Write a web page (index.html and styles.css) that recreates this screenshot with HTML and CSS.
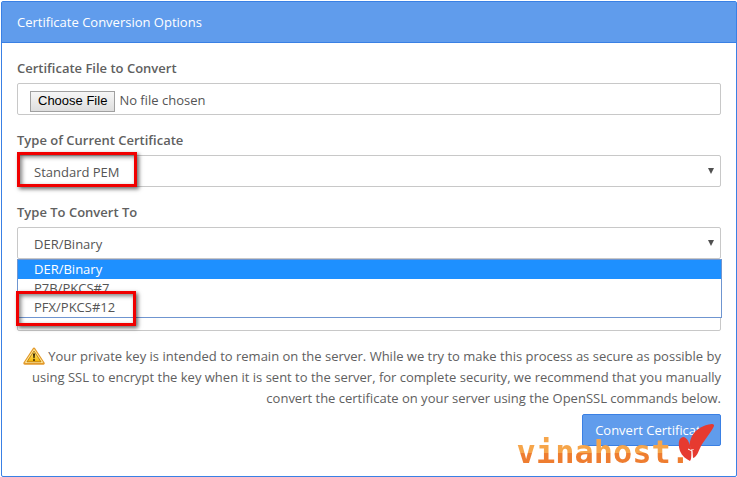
FILE: index.html
```html
<!DOCTYPE html>
<html lang="en">
<head>
    <meta charset="UTF-8">
    <meta name="viewport" content="width=device-width, initial-scale=1.0">
    <title>Certificate Conversion Options</title>
    <link rel="stylesheet" href="styles.css">
</head>
<body>
    <form class="panel">
        <h1 class="panel-heading">Certificate Conversion Options</h1>
        <div class="panel-body">
            <div class="form-group">
                <label for="cert-file">Certificate File to Convert</label>
                <input class="form-control" type="file" id="cert-file">
            </div>
            <div class="form-group">
                <label for="current-type">Type of Current Certificate</label>
                <div class="select">
                    <select class="form-control" id="current-type">
                        <option>Standard PEM</option>
                    </select>
                    <span class="highlight highlight-current"></span>
                </div>
            </div>
            <div class="form-group">
                <label for="convert-type">Type To Convert To</label>
                <div class="select">
                    <select class="form-control" id="convert-type">
                        <option>DER/Binary</option>
                        <option>P7B/PKCS#7</option>
                        <option>PFX/PKCS#12</option>
                    </select>
                    <ul class="options" role="listbox" aria-label="Type To Convert To">
                        <li class="selected" role="option" aria-selected="true">DER/Binary</li>
                        <li role="option">P7B/PKCS#7</li>
                        <li role="option">PFX/PKCS#12</li>
                    </ul>
                    <span class="highlight highlight-pfx"></span>
                </div>
            </div>
            <!-- sits under the open list -->
            <div class="form-group form-group-covered">
                <input class="form-control" type="text" aria-label="Private key">
            </div>
            <p class="note">
                <svg class="warning" viewBox="0 0 22 20" aria-hidden="true">
                    <defs>
                        <linearGradient id="amber" x1="0" y1="0" x2="0" y2="1">
                            <stop offset="0" stop-color="#fff08a"/>
                            <stop offset="1" stop-color="#f5b400"/>
                        </linearGradient>
                    </defs>
                    <path d="M11 3 20.3 17.3H1.7Z" fill="#e39a2c" stroke="#e39a2c" stroke-width="2.8" stroke-linejoin="round"/>
                    <path d="M11 3.4 19.6 16.4H2.4Z" fill="#ffe27a" stroke="#ffe9a0" stroke-linejoin="round"/>
                    <path d="M11 5 18 15.8H4Z" fill="url(#amber)" stroke="#b87408" stroke-width="0.8" stroke-linejoin="round"/>
                    <path d="M9.9 7.5h2.2l-.5 4.8h-1.2Z" fill="#3c2a05"/>
                    <circle cx="11" cy="14" r="1" fill="#3c2a05"/>
                </svg>
                Your private key is intended to remain on the server. While we try to make this process as secure as possible by using SSL to encrypt the key when it is sent to the server, for complete security, we recommend that you manually convert the certificate on your server using the OpenSSL commands below.
            </p>
            <div class="actions">
                <button class="btn" type="submit">Convert Certificate</button>
                <div class="watermark">
                    <span class="watermark-text">vinahost.</span>
                    <svg class="watermark-mark" viewBox="0 0 36 38" aria-hidden="true">
                        <path d="M5 13C0 14 0 21 2 27C4 32 8 35 12 37C14 34 14 28 13 24C11 18 9 13 5 13Z" fill="#e63a30"/>
                        <path d="M34 0C25 1 18 5 14 12C11 18 11 23 14 26L15 34C19 33 20 28 23 22C27 15 34 7 36 2C36 1 36 0 34 0Z" fill="#e63a30"/>
                        <path d="M10 25 13 26.500 15.500 25.500M14 27v8" fill="none" stroke="#fff" stroke-width="1"/>
                    </svg>
                </div>
            </div>
        </div>
    </form>
</body>
</html>
```
FILE: styles.css
```css
* { box-sizing: border-box; }
body { margin: 1px 0 0 1px; font-family: "Open Sans", sans-serif; font-size: 13px; line-height: 20px; color: #606060; background-color: #fff; }
.panel { border: 1px solid #3a80e4; border-radius: 2px; }
.panel-heading { margin: 0; padding: 10px 15px; font-size: 13px; font-weight: 400; color: #fff; background-color: #609cec; border-bottom: 1px solid #3a80e4; }
.panel-body { padding: 15px 15px 30px; }

.form-group { margin-bottom: 15px; }
.form-group label { display: block; margin-bottom: 5px; font-weight: 600; }
.form-group-covered { padding-top: 25px; }
.form-control { display: block; width: 100%; height: 32px; padding: 0 16px; font: inherit; color: #555; background-color: #fff; border: 1px solid #c8c8c8; border-radius: 2px; }
input.form-control { padding: 6px 12px; }
.form-control::file-selector-button { height: 21px; margin: 0 4px 0 0; padding: 0 7px; font: 13px/18px "Liberation Sans", Arial, sans-serif; color: #000; background: linear-gradient(#f6f6f6, #dedede); border: 1px solid #a0a0a0; border-radius: 0; }

.select { position: relative; }
select.form-control { padding-top: 2px; appearance: none; }
.select::after { content: ""; position: absolute; top: 13px; right: 7px; border: 3px solid transparent; border-top: 6px solid #505050; border-bottom: 0; }
.options { position: absolute; top: 32px; left: 0; right: -1px; margin: 0; padding: 0; list-style: none; line-height: 19px; background-color: #fff; border: 1px solid #6f95d0; z-index: 1; }
.options li { padding: 0 16px; color: #555; }
.options .selected { color: #fff; background-color: #1e90ff; }

.highlight { position: absolute; width: 120px; height: 35px; border: 3px solid #f00000; box-shadow: 2px 2px 4px rgba(0, 0, 0, 0.6), inset 2px 2px 4px rgba(0, 0, 0, 0.5); pointer-events: none; z-index: 2; }
.highlight-current { top: -3px; left: 0; }
.highlight-pfx { top: 64px; left: -1px; }

.note { margin: 0 0 5px; line-height: 21px; text-align: right; }
.warning { width: 22px; height: 20px; vertical-align: -5px; }

.actions { position: relative; display: flex; justify-content: flex-end; }
.btn { height: 32px; padding: 0 12px; font: inherit; color: #fff; background-color: #609cec; border: 1px solid #3a80e4; border-radius: 2px; }
.watermark { position: absolute; top: 10px; right: 7px; display: flex; align-items: flex-start; }
.watermark-text { margin: 9px -12px 0 0; font: bold 32px/38px "DejaVu Sans Mono", monospace; color: transparent; background: linear-gradient(#f6a54a 52%, #ee7d30 52%); background-clip: text; }
.watermark-mark { width: 36px; height: 38px; }
```
